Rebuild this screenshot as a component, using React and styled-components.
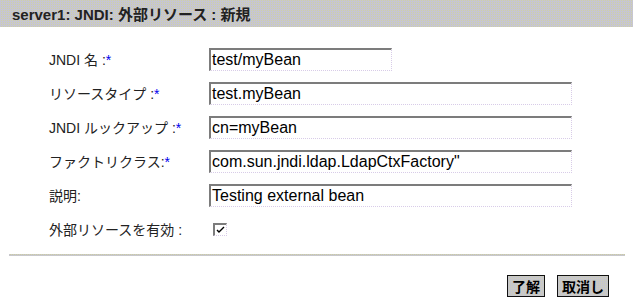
import React from "react";
import styled, { createGlobalStyle } from "styled-components";

const GlobalStyle = createGlobalStyle`
  body {
    margin: 0;
    background: #fff;
    font-family: "Liberation Sans", "Noto Sans CJK JP", sans-serif;
  }
`;

const dither = `
  background-color: #c9c9c4;
  background-image: repeating-conic-gradient(#cfcfa8 0 25%, #c6c6d2 0 100%);
  background-size: 2px 2px;
`;

const Page = styled.div`
  width: 633px;
  height: 300px;
  overflow: hidden;
`;

const TitleBar = styled.div`
  ${dither}
  height: 27px;
  padding-left: 12px;
  display: flex;
  align-items: center;
  font-size: 15px;
  font-weight: bold;
  color: #222;
`;

const Form = styled.div`
  display: grid;
  grid-template-columns: 160px auto;
  grid-auto-rows: 34px;
  align-items: center;
  padding: 15px 0 0 49px;
`;

const Label = styled.div`
  font-size: 14px;
  color: #222;
  white-space: nowrap;
`;

const Star = styled.span`
  color: #0000ee;
`;

const Field = styled.div`
  box-sizing: border-box;
  width: ${(p) => p.$width}px;
  height: 23px;
  border-top: 2px solid #7c7c7c;
  border-left: 2px solid #7c7c7c;
  border-right: 1px dotted #d8cce8;
  border-bottom: 1px dotted #d8cce8;
  padding-left: 1px;
  font-size: 16px;
  line-height: 20px;
  color: #000;
  white-space: nowrap;
  overflow: hidden;
`;

const Check = styled.div`
  box-sizing: border-box;
  width: 14px;
  height: 13px;
  margin-left: 4px;
  border-top: 2px solid #7c7c7c;
  border-left: 2px solid #7c7c7c;
  border-right: 1px dotted #d8cce8;
  border-bottom: 1px dotted #d8cce8;
  display: flex;
  align-items: center;
  justify-content: center;
`;

const Divider = styled.div`
  background-color: #c8c8bc;
  background-image: repeating-conic-gradient(#cccca4 0 25%, #c8c8cc 0 100%);
  background-size: 2px 2px;
  height: 2px;
  margin: 8px 8px 0 9px;
`;

const Actions = styled.div`
  display: flex;
  justify-content: flex-end;
  gap: 12px;
  padding: 19px 24px 0 0;
`;

const Button = styled.div`
  background-color: #c8c8c4;
  background-image: repeating-conic-gradient(#cfcfb8 0 25%, #c6c6cc 0 100%);
  background-size: 2px 2px;
  border: 1px solid #111;
  height: 20px;
  padding: 0 4px;
  display: flex;
  align-items: center;
  font-size: 14px;
  font-weight: bold;
  color: #000;
`;

const rows = [
  { label: "JNDI 名 :", req: true, value: "test/myBean", width: 183 },
  { label: "リソースタイプ :", req: true, value: "test.myBean", width: 363 },
  { label: "JNDI ルックアップ :", req: true, value: "cn=myBean", width: 363 },
  { label: "ファクトリクラス:", req: true, value: "com.sun.jndi.ldap.LdapCtxFactory\"", width: 363 },
  { label: "説明:", req: false, value: "Testing external bean", width: 363 },
];

export default function App() {
  return (
    <Page>
      <GlobalStyle />
      <TitleBar>server1: JNDI: 外部リソース : 新規</TitleBar>
      <Form>
        {rows.map((r) => (
          <React.Fragment key={r.label}>
            <Label>
              {r.label}
              {r.req && <Star>*</Star>}
            </Label>
            <Field $width={r.width}>{r.value}</Field>
          </React.Fragment>
        ))}
        <Label>外部リソースを有効 :</Label>
        <Check>
          <svg width="9" height="8" viewBox="0 0 9 8">
            <path d="M1 4 L3 6 L8 1" stroke="#000" strokeWidth="1.4" fill="none" />
          </svg>
        </Check>
      </Form>
      <Divider />
      <Actions>
        <Button>了解</Button>
        <Button>取消し</Button>
      </Actions>
    </Page>
  );
}
